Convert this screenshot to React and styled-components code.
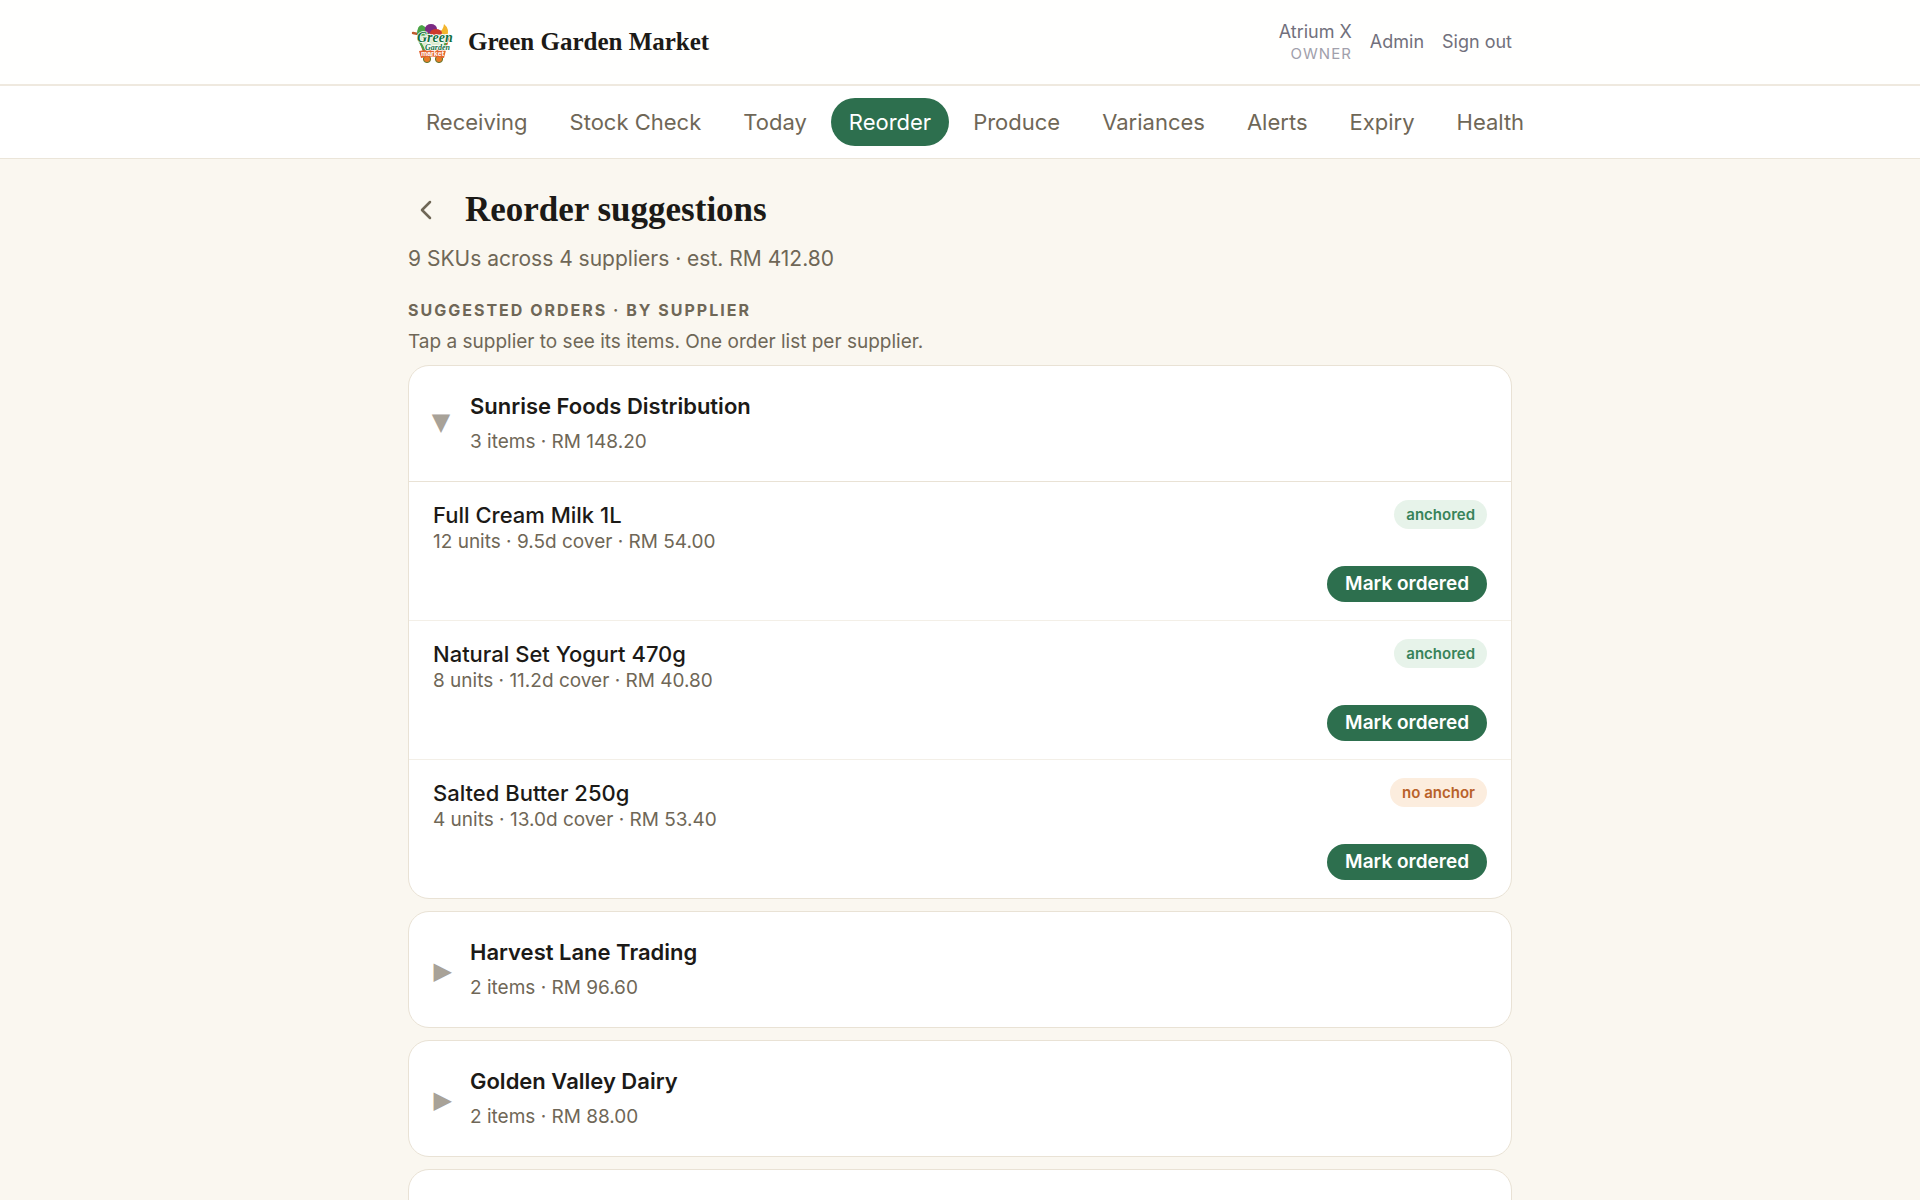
import React, { useState } from "react";
import styled, { createGlobalStyle, css } from "styled-components";

const GlobalStyle = createGlobalStyle`
  *, *::before, *::after { box-sizing: border-box; }
  body {
    margin: 0;
    background: #faf7f0;
    color: #1c1a17;
    font-family: Inter, "Liberation Sans", sans-serif;
    font-size: 21px;
    line-height: 30px;
  }
  button { font: inherit; color: inherit; border: 0; background: none; padding: 0; cursor: pointer; }
  h1, h2, h3, p, ul { margin: 0; padding: 0; }
  a { color: inherit; text-decoration: none; }
`;

const serif = css`
  font-family: "Liberation Serif", serif;
  font-weight: 700;
`;

const container = css`
  width: 100%;
  max-width: 1152px;
  margin: 0 auto;
  padding-left: 24px;
  padding-right: 24px;
`;

const Header = styled.header`
  background: #fffffe;
  border-bottom: 2px solid #efe9df;
`;

const HeaderInner = styled.div`
  ${container}
  display: flex;
  align-items: center;
  justify-content: space-between;
  height: 84px;
`;

const Brand = styled.a`
  ${serif}
  display: flex;
  align-items: center;
  gap: 15px;
  font-size: 25px;
`;

const Account = styled.div`
  display: flex;
  align-items: center;
  gap: 18px;
  color: #71707c;
  font-size: 18px;
  line-height: 24px;
`;

const User = styled.div`
  display: flex;
  flex-direction: column;
  padding-top: 2px;
  text-align: right;
  line-height: 22px;
`;

const Role = styled.span`
  color: #a1a0ab;
  font-size: 15px;
  letter-spacing: 1px;
`;

const Nav = styled.nav`
  background: #fff;
  border-bottom: 1px solid #ebe5d9;
`;

const Tabs = styled.div`
  ${container}
  display: flex;
  gap: 6px;
  padding-top: 12px;
  padding-bottom: 12px;
`;

const Tab = styled.a`
  flex: none;
  padding: 9px 18px;
  border-radius: 24px;
  font-size: 22px;
  font-weight: 400;
  color: ${(p) => (p.$active ? "#fff" : "#6f6757")};
  background: ${(p) => (p.$active ? "#2d6f4e" : "transparent")};
`;

const Main = styled.main`
  ${container}
  padding-top: 28px;
  padding-bottom: 48px;
`;

const TitleRow = styled.div`
  display: flex;
  align-items: center;
  gap: 21px;
  height: 45px;
`;

const BackButton = styled.button`
  display: grid;
  place-items: center;
  width: 36px;
  height: 36px;
  color: #6f6757;
`;

const Title = styled.h1`
  ${serif}
  font-size: 35px;
  line-height: 42px;
`;

const Summary = styled.p`
  margin-top: 12px;
  color: #6f6757;
`;

const SectionTitle = styled.h2`
  margin-top: 24px;
  color: #6f6757;
  font-size: 16px;
  font-weight: 700;
  line-height: 24px;
  letter-spacing: 2px;
  text-transform: uppercase;
`;

const Hint = styled.p`
  margin: 6px 0 10px;
  color: #6f6757;
  font-size: 19px;
  line-height: 27px;
`;

const CardList = styled.div`
  display: flex;
  flex-direction: column;
  gap: 12px;
`;

const Card = styled.section`
  overflow: hidden;
  background: #fff;
  border: 1px solid #e9e2d5;
  border-radius: 21px;
`;

const CardHeader = styled.button`
  display: flex;
  align-items: center;
  gap: 18px;
  width: 100%;
  padding: 24px 21px 27px;
  text-align: left;
`;

const Marker = styled.span`
  width: 22px;
  padding-top: ${(p) => (p.$open ? "0" : "6px")};
  color: #a8a298;
  font-family: "DejaVu Sans", sans-serif;
  font-size: 24px;
  text-align: ${(p) => (p.$open ? "center" : "right")};
`;

const Supplier = styled.span`
  display: flex;
  flex-direction: column;
  gap: 8px;
`;

const SupplierName = styled.span`
  font-size: 22px;
  font-weight: 600;
  line-height: 32px;
`;

const Detail = styled.span`
  color: #6f6757;
  font-size: 19px;
  line-height: 24px;
`;

const Item = styled.li`
  display: flex;
  flex-direction: column;
  gap: 12px;
  padding: 18px 24px;
  border-top: 1px solid ${(p) => (p.$first ? "#e9e2d5" : "#f3efe7")};
`;

const Items = styled.ul`
  list-style: none;
`;

const ItemTop = styled.div`
  display: flex;
  align-items: flex-start;
  justify-content: space-between;
`;

const ItemText = styled.div`
  display: flex;
  flex-direction: column;
`;

const ItemName = styled.h3`
  font-size: 22px;
  font-weight: 500;
`;

const Badge = styled.span`
  padding: 4px 12px;
  border-radius: 15px;
  font-size: 15px;
  font-weight: 600;
  line-height: 21px;
  color: ${(p) => (p.$anchored ? "#38835a" : "#b9622a")};
  background: ${(p) => (p.$anchored ? "#e7f3ea" : "#fcedde")};
`;

const OrderButton = styled.button`
  align-self: flex-end;
  padding: 6px 18px;
  border-radius: 18px;
  background: #2d6f4e;
  color: #fff;
  font-size: 19px;
  font-weight: 600;
  line-height: 24px;
`;

const tabs = ["Receiving", "Stock Check", "Today", "Reorder", "Produce", "Variances", "Alerts", "Expiry", "Health"];

const suppliers = [
  {
    name: "Sunrise Foods Distribution",
    detail: "3 items · RM 148.20",
    items: [
      { name: "Full Cream Milk 1L", detail: "12 units · 9.5d cover · RM 54.00", anchored: true },
      { name: "Natural Set Yogurt 470g", detail: "8 units · 11.2d cover · RM 40.80", anchored: true },
      { name: "Salted Butter 250g", detail: "4 units · 13.0d cover · RM 53.40", anchored: false },
    ],
  },
  { name: "Harvest Lane Trading", detail: "2 items · RM 96.60", items: [] },
  { name: "Golden Valley Dairy", detail: "2 items · RM 88.00", items: [] },
  { name: "Pantry Wholesale", detail: "2 items · RM 80.00", items: [] },
];

function Logo() {
  return (
    <svg width="45" height="45" viewBox="0 0 45 45" aria-hidden="true">
      <path d="M5 13l5 1 7 20h18l6-18" fill="none" stroke="#bd5b2c" strokeWidth="2.4" strokeLinecap="round" />
      <path d="M9 15q0-10 5-10l8 5-1 7z" fill="#4ba446" />
      <ellipse cx="23" cy="9" rx="6" ry="5" fill="#7b2a83" />
      <path d="M28 11q7 2 8-7 6 5 3 12z" fill="#f3b52c" />
      <ellipse cx="28" cy="13" rx="6" ry="4" fill="#cf3a2c" />
      <path d="M10 16l29-2-5 17H17z" fill="#dcebcf" />
      <path d="M10 19l7 12h18l4-13" fill="none" stroke="#4ba446" strokeWidth="2" />
      <circle cx="19" cy="39" r="3.6" fill="#e87b27" stroke="#5b7a2f" />
      <circle cx="31" cy="39" r="3.6" fill="#e87b27" stroke="#5b7a2f" />
      <path d="M11 31q14-3 27-1l-2 8q-12-3-23 0z" fill="#e4632c" />
      <g fontFamily="Liberation Serif, serif" fontWeight="700" fontStyle="italic" fill="#12703f" stroke="#fff" strokeWidth="1.4" paintOrder="stroke">
        <text x="9" y="22" fontSize="14">Green</text>
        <text x="17" y="30" fontSize="8">Garden</text>
      </g>
      <text x="13" y="36" fontFamily="Liberation Sans, sans-serif" fontWeight="700" fontSize="7" fill="#fff">market</text>
    </svg>
  );
}

function SupplierCard({ supplier, defaultOpen }) {
  const [open, setOpen] = useState(defaultOpen);
  return (
    <Card>
      <CardHeader type="button" aria-expanded={open} onClick={() => setOpen(!open)}>
        <Marker $open={open} aria-hidden="true">{open ? "▼" : "▶"}</Marker>
        <Supplier>
          <SupplierName>{supplier.name}</SupplierName>
          <Detail>{supplier.detail}</Detail>
        </Supplier>
      </CardHeader>
      {open && (
        <Items>
          {supplier.items.map((item, i) => (
            <Item key={item.name} $first={i === 0}>
              <ItemTop>
                <ItemText>
                  <ItemName>{item.name}</ItemName>
                  <Detail>{item.detail}</Detail>
                </ItemText>
                <Badge $anchored={item.anchored}>{item.anchored ? "anchored" : "no anchor"}</Badge>
              </ItemTop>
              <OrderButton type="button">Mark ordered</OrderButton>
            </Item>
          ))}
        </Items>
      )}
    </Card>
  );
}

export default function App() {
  return (
    <>
      <GlobalStyle />
      <Header>
        <HeaderInner>
          <Brand href="#home">
            <Logo />
            <span>Green Garden Market</span>
          </Brand>
          <Account>
            <User>
              <span>Atrium X</span>
              <Role>OWNER</Role>
            </User>
            <a href="#admin">Admin</a>
            <button type="button">Sign out</button>
          </Account>
        </HeaderInner>
      </Header>
      <Nav>
        <Tabs>
          {tabs.map((tab) => (
            <Tab key={tab} href={`#${tab}`} $active={tab === "Reorder"} aria-current={tab === "Reorder" ? "page" : undefined}>
              {tab}
            </Tab>
          ))}
        </Tabs>
      </Nav>
      <Main>
        <TitleRow>
          <BackButton type="button" aria-label="Back">
            <svg width="24" height="24" viewBox="0 0 24 24" fill="none" stroke="currentColor" strokeWidth="2.5" strokeLinecap="round" strokeLinejoin="round">
              <path d="M16 4l-8 8 8 8" />
            </svg>
          </BackButton>
          <Title>Reorder suggestions</Title>
        </TitleRow>
        <Summary>9 SKUs across 4 suppliers · est. RM 412.80</Summary>
        <SectionTitle>Suggested orders · by supplier</SectionTitle>
        <Hint>Tap a supplier to see its items. One order list per supplier.</Hint>
        <CardList>
          {suppliers.map((supplier, i) => (
            <SupplierCard key={supplier.name} supplier={supplier} defaultOpen={i === 0} />
          ))}
        </CardList>
      </Main>
    </>
  );
}
